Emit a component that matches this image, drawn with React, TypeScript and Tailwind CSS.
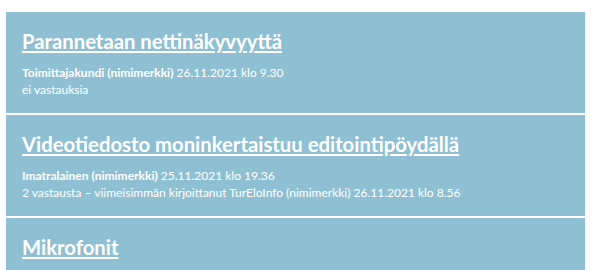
const topics = [
  {
    title: 'Parannetaan nettinäkyvyyttä',
    author: 'Toimittajakundi (nimimerkki)',
    date: '26.11.2021 klo 9.30',
    replies: 'ei vastauksia',
  },
  {
    title: 'Videotiedosto moninkertaistuu editointipöydällä',
    author: 'Imatralainen (nimimerkki)',
    date: '25.11.2021 klo 19.36',
    replies: '2 vastausta – viimeisimmän kirjoittanut TurEloInfo (nimimerkki) 26.11.2021 klo 8.56',
  },
  {
    title: 'Mikrofonit',
    author: '',
    date: '',
    replies: '',
  },
]

export default function App() {
  return (
    <div className="h-[270px] overflow-hidden bg-white pt-3 pl-[6px] pr-[18px] font-['Lato',sans-serif] text-white">
      <div className="flex flex-col gap-[2px]">
        {topics.map((topic) => (
          <div key={topic.title} className="h-[101px] bg-[#8fbfd2] px-4 pt-[17px]">
            <a
              href="#"
              className="block w-fit text-[20.3px] font-bold leading-[24px] underline decoration-2 underline-offset-2"
            >
              {topic.title}
            </a>
            {topic.author && (
              <div className="mt-3 text-[12px] leading-[16.5px]">
                <div>
                  <span className="font-bold">{topic.author}</span> {topic.date}
                </div>
                <div>{topic.replies}</div>
              </div>
            )}
          </div>
        ))}
      </div>
    </div>
  )
}
